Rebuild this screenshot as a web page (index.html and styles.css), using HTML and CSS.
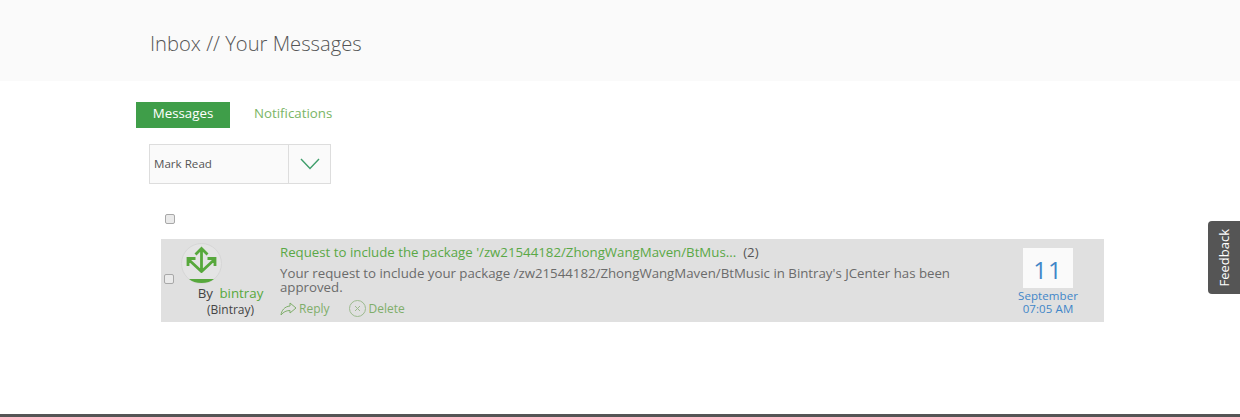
FILE: index.html
```html
<!DOCTYPE html>
<html lang="en">
<head>
    <meta charset="UTF-8">
    <title>Inbox // Your Messages</title>
    <link rel="stylesheet" href="styles.css">
</head>
<body>
    <header class="page-head">
        <h1>Inbox // Your Messages</h1>
    </header>

    <main class="content">
        <nav class="tabs">
            <a class="tab active" href="#">Messages</a>
            <a class="tab" href="#">Notifications</a>
        </nav>

        <div class="bulk-select">
            <span class="bulk-label">Mark Read</span>
            <span class="bulk-arrow">
                <svg width="20" height="12" viewBox="0 0 20 12"><path d="M1 1l9 9.500L19 1" fill="none" stroke="#3f9e6b" stroke-width="1.400"/></svg>
            </span>
        </div>

        <div class="select-all"><input class="check" type="checkbox"></div>

        <div class="message">
            <input class="check message-check" type="checkbox">
            <div class="sender">
                <div class="avatar">
                    <svg width="42" height="42" viewBox="0 0 42 42">
                        <circle cx="20.500" cy="20.500" r="20" fill="#e4e4e4" stroke="#d6d6d6"/>
                        <path d="M20.500 29V6M14.500 11.500l6-6 6 6M21 29L7 16M7 23v-7.500h7.500M20 29l14-13M34 23v-7.500h-7.500" fill="none" stroke="#57a83c" stroke-width="2.800"/>
                        <path d="M8 36h25c-3 2.500-7 4-12.500 4S11 38.500 8 36z" fill="#57a83c"/>
                    </svg>
                </div>
                <div class="by">By <a href="#">bintray</a></div>
                <div class="sender-name">(Bintray)</div>
            </div>
            <div class="body">
                <div class="subject"><a href="#">Request to include the package '/zw21544182/ZhongWangMaven/BtMus...</a><span class="count">(2)</span></div>
                <p class="excerpt">Your request to include your package /zw21544182/ZhongWangMaven/BtMusic in Bintray's JCenter has been approved.</p>
                <div class="actions">
                    <a href="#">
                        <svg width="17" height="14" viewBox="0 0 17 14"><path d="M10 1l6 5-6 5V8.500C6 8.500 3.500 10 1 13c.5-4.500 3.500-8.500 9-9z" fill="none" stroke="#7fae6a"/></svg>
                        Reply
                    </a>
                    <a class="delete" href="#">
                        <svg width="17" height="17" viewBox="0 0 17 17"><circle cx="8.500" cy="8.500" r="8" fill="none" stroke="#9dba8f"/><path d="M6 6l5 5M11 6l-5 5" stroke="#9dba8f"/></svg>
                        Delete
                    </a>
                </div>
            </div>
            <div class="date">
                <div class="day">11</div>
                <div class="month">September</div>
                <div class="time">07:05 AM</div>
            </div>
        </div>
    </main>

    <a class="feedback" href="#"><span>Feedback</span></a>
    <footer class="page-foot"></footer>
</body>
</html>
```

FILE: styles.css
```css
html, body {
    height: 100%;
}

body {
    margin: 0;
    font-family: "Open Sans", sans-serif;
    color: #555;
    background: #fff;
    display: flex;
    flex-direction: column;
    overflow: hidden;
}

a {
    text-decoration: none;
}

/* Header */
.page-head {
    height: 81px;
    background: #fafafa;
    padding-left: 150px;
    box-sizing: border-box;
}

.page-head h1 {
    margin: 0;
    padding-top: 29px;
    font-size: 20.200px;
    line-height: 28px;
    font-weight: 300;
    color: #555;
}

.content {
    flex: 1;
    padding: 21px 136px 0;
}

/* Tabs */
.tabs {
    display: flex;
    height: 26px;
}

.tab {
    font-size: 13.300px;
    line-height: 23px;
    color: #7ab565;
}

.tab.active {
    width: 94px;
    box-sizing: border-box;
    margin-right: 24px;
    text-align: center;
    background: #3f9e49;
    color: #fff;
}

/* Bulk action */
.bulk-select {
    display: flex;
    width: 182px;
    height: 40px;
    box-sizing: border-box;
    margin: 16px 0 0 13px;
    background: #fafafa;
    border: 1px solid #ddd;
}

.bulk-label {
    flex: 1;
    padding-left: 4px;
    font-size: 11.600px;
    line-height: 38px;
    color: #555;
}

.bulk-arrow {
    width: 41px;
    display: flex;
    align-items: center;
    justify-content: center;
    border-left: 1px solid #ddd;
}

.select-all {
    height: 10px;
    margin: 30px 0 0 29px;
}

.check {
    appearance: none;
    display: block;
    width: 10px;
    height: 10px;
    margin: 0;
    box-sizing: border-box;
    background: #eaeaea;
    border: 1px solid #a8a8a8;
    border-radius: 2px;
}

/* Message row */
.message {
    display: flex;
    width: 943px;
    height: 83px;
    margin: 15px 0 0 25px;
    background: #e0e0e0;
}

.message-check {
    margin: 35px 0 0 3px;
    flex: none;
}

.sender {
    width: 99px;
    margin-left: 2px;
    padding: 4px 0 0 5px;
    font-size: 13.300px;
    text-align: center;
    flex: none;
}

.avatar {
    width: 42px;
    height: 42px;
}

.avatar svg {
    display: block;
}

.by {
    margin-top: -1px;
    line-height: 18px;
    color: #444;
}

.by a {
    margin-left: 3px;
    color: #57a83c;
}

.sender-name {
    font-size: 12px;
    line-height: 16px;
    color: #444;
}

.body {
    width: 680px;
    padding-top: 4px;
    flex: none;
    font-size: 13.250px;
}

.subject {
    line-height: 18px;
}

.subject a {
    color: #5aa846;
}

.count {
    margin-left: 7px;
    color: #555;
}

.excerpt {
    margin: 5px 0 0;
    line-height: 14px;
    color: #6b6b6b;
}

.actions {
    display: flex;
    gap: 19px;
    margin-top: 6px;
    font-size: 12px;
}

.actions a {
    display: flex;
    align-items: center;
    gap: 2px;
    color: #7fae6a;
    line-height: 17px;
}

.actions .delete {
    gap: 3px;
}

.date {
    width: 60px;
    margin-left: 58px;
    padding-top: 9px;
    text-align: center;
    flex: none;
    font-size: 11.500px;
    letter-spacing: 0.100px;
    color: #3f86c8;
}

.day {
    width: 50px;
    height: 40px;
    margin: 0 auto;
    background: #fafafa;
    font-size: 24px;
    line-height: 44px;
    letter-spacing: 1px;
}

.month {
    line-height: 13px;
    padding-top: 1px;
}

.time {
    line-height: 13px;
}

/* Feedback tab */
.feedback {
    position: fixed;
    top: 221px;
    right: 0;
    width: 32px;
    height: 73px;
    display: flex;
    align-items: center;
    justify-content: center;
    background: #555;
    border-radius: 4px 0 0 4px;
    color: #fff;
    font-size: 13px;
}

.feedback span {
    writing-mode: vertical-rl;
    transform: rotate(180deg);
}

.page-foot {
    height: 3px;
    background: #555;
    flex: none;
}
```
